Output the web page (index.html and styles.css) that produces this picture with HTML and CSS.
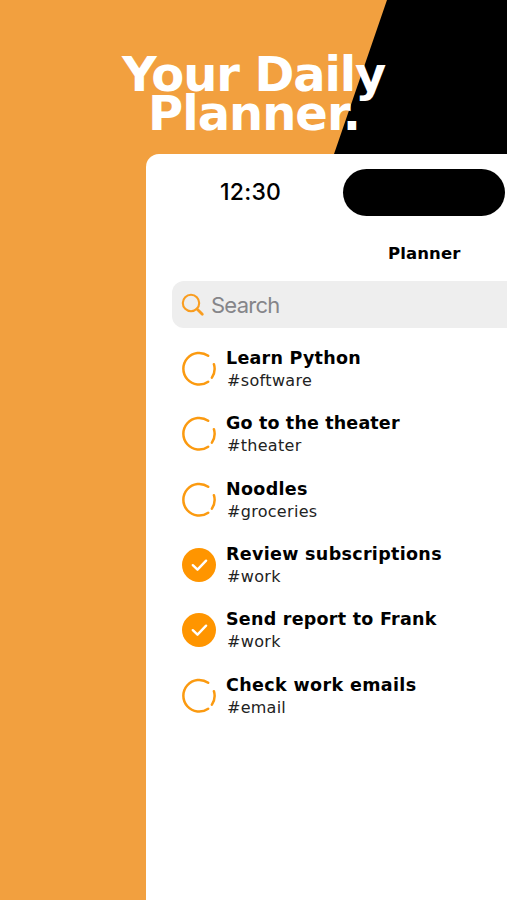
FILE: index.html
```
<!DOCTYPE html>
<html lang="en">
<head>
<meta charset="utf-8">
<title>Your Daily Planner</title>
<link rel="stylesheet" href="styles.css">
</head>
<body>
<svg width="0" height="0" class="defs">
  <symbol id="open" viewBox="0 0 36 36"><g fill="none" stroke="#fb9a10" stroke-width="2.5" stroke-linecap="round"><path d="M27.2 4.8A15.8 15.8 0 1 0 27.2 30.7"/><path d="M32.9 13.2A15.8 15.8 0 0 1 30.9 26.6"/></g></symbol>
  <symbol id="done" viewBox="0 0 36 36"><circle cx="18" cy="18" r="17" fill="#ff9500"/><path d="M11.8 18.2l4.7 4.5 8.6-9" fill="none" stroke="#fff" stroke-width="2.4" stroke-linecap="round" stroke-linejoin="round"/></symbol>
</svg>
<main class="poster">
  <header class="hero">
    <h1><span class="line1">Your Daily</span><span class="line2">Planner.</span></h1>
  </header>
  <section class="phone">
    <div class="status"><time class="clock">12:30</time><div class="island"></div></div>
    <h2 class="heading">Planner</h2>
    <div class="search">
      <svg class="lens" viewBox="0 0 24 24"><g fill="none" stroke="#f99d20" stroke-linecap="round"><circle cx="10" cy="10" r="8.2" stroke-width="2.1"/><path d="M16 16l5.3 5.3" stroke-width="2.8"/></g></svg>
      <span>Search</span>
    </div>
    <ul class="tasks">
      <li><svg class="mark"><use href="#open"/></svg><div><h3 class="t1">Learn Python</h3><p class="s1">#software</p></div></li>
      <li><svg class="mark"><use href="#open"/></svg><div><h3 class="t2">Go to the theater</h3><p class="s2">#theater</p></div></li>
      <li><svg class="mark"><use href="#open"/></svg><div><h3 class="t3">Noodles</h3><p class="s3">#groceries</p></div></li>
      <li><svg class="mark"><use href="#done"/></svg><div><h3 class="t4">Review subscriptions</h3><p class="s4">#work</p></div></li>
      <li><svg class="mark"><use href="#done"/></svg><div><h3 class="t5">Send report to Frank</h3><p class="s4">#work</p></div></li>
      <li><svg class="mark"><use href="#open"/></svg><div><h3 class="t6">Check work emails</h3><p class="s6">#email</p></div></li>
    </ul>
  </section>
</main>
</body>
</html>
```
FILE: styles.css
```
* { box-sizing: border-box; margin: 0; padding: 0; }
body { width: 507px; height: 900px; overflow: hidden; font-family: "DejaVu Sans", sans-serif; color: #000; }
.defs { display: none; }
.poster { height: 900px; display: flex; flex-direction: column; background: #f2a03f; overflow: hidden; }
.hero { flex: none; height: 154px; padding-top: 55px; position: relative; }
.hero::before { content: ""; position: absolute; inset: 0; height: 170px; background: #000; clip-path: polygon(387px 0, 100% 0, 100% 100%, 328.5px 100%); }
h1 { position: relative; color: #fff; font-size: 48px; line-height: 39px; font-weight: 700; white-space: nowrap; }
h1 span { display: block; }
.line1 { margin-left: 122px; letter-spacing: -1.1px; }
.line2 { margin-left: 148px; letter-spacing: -1px; }
.phone { position: relative; flex: 1; margin-left: 146px; width: 560px; background: #fff; border-radius: 13px 0 0 0; }
.status { display: flex; height: 77px; padding-top: 15px; }
.clock { width: 197px; padding-left: 74px; font: 500 23px/47px Inter, sans-serif; letter-spacing: 0.25px; }
.island { width: 162px; height: 47px; border-radius: 24px; background: #000; }
.heading { height: 50px; padding-left: 242px; font-size: 16.5px; line-height: 45px; letter-spacing: 0.1px; }
.search { display: flex; align-items: center; height: 47px; margin-left: 26px; padding-left: 9px; gap: 6px; background: #eee; border-radius: 12px; color: #858589; font: 400 22px/47px Inter, sans-serif; letter-spacing: -0.75px; }
.search span { padding-top: 1px; }
.lens { width: 24px; height: 24px; }
.tasks { list-style: none; padding: 8.2px 0 0 35px; }
li { display: flex; align-items: center; height: 65.4px; gap: 9px; }
li div { padding-top: 1px; }
.mark { width: 36px; height: 36px; flex: none; }
h3 { font-size: 17.5px; line-height: 23px; white-space: nowrap; }
p { font-size: 16px; line-height: 22px; color: #222; padding-left: 1px; }
.t1, .t5 { letter-spacing: 0.25px; }
.t2 { letter-spacing: 0.15px; }
.t3, .t4 { letter-spacing: 0.32px; }
.t6 { letter-spacing: 0.37px; }
.s1 { letter-spacing: 0.35px; }
.s2, .s3 { letter-spacing: 0.3px; }
.s4 { letter-spacing: 0.35px; }
.s6 { letter-spacing: 0.25px; }
```
